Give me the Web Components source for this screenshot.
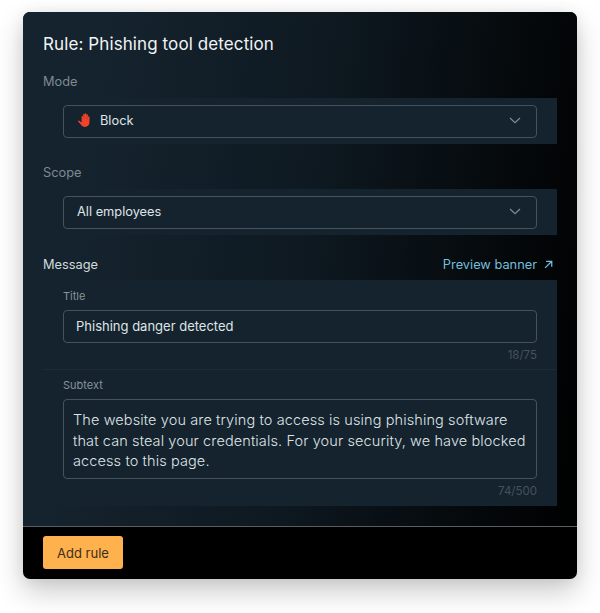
<!DOCTYPE html>
<html lang="en">
<head>
<meta charset="utf-8">
<title>Rule</title>
<style>
  html, body { margin: 0; background: #fff; }
  body { padding: 12px 23px 34px; font-family: Inter, "Liberation Sans", sans-serif; }
</style>
</head>
<body>
<rule-card heading="Rule: Phishing tool detection">
  <rule-label>Mode</rule-label>
  <rule-panel>
    <rule-select>
      <svg slot="icon" width="14" height="14" viewBox="0 0 14 14"><path fill="#f0432a" d="M3.600 3.600c0-.9 1.500-.9 1.500 0v2.400h.1V1.500c0-.9 1.500-.9 1.500 0v4.500h.1V1c0-.9 1.500-.9 1.500 0v5h.1V1.900c0-.9 1.500-.9 1.500 0v5.400h.1V4c0-.9 1.500-.9 1.500 0v5.200c0 2.800-2 4.700-4.600 4.700-1.800 0-3-.8-3.800-2.100L.2 8.700c-.5-.8.500-1.500 1.100-.9l2.300 1.800z"/></svg>
      Block
    </rule-select>
  </rule-panel>
  <rule-label style="--gap:11px">Scope</rule-label>
  <rule-panel>
    <rule-select>All employees</rule-select>
  </rule-panel>
  <rule-label style="--gap:11px;--colour:#d3d9dd;--nudge:2px">
    Message
    <a slot="aside">Preview banner
      <svg width="9" height="9" viewBox="0 0 10 10" fill="none" stroke="#74bfdc" stroke-width="1.400"><path d="M1.200 8.800 8.600 1.400M2.400 1.400h6.200v6.200"/></svg>
    </a>
  </rule-label>
  <rule-panel class="message">
    <text-field label="Title" count="18/75" divided>Phishing danger detected</text-field>
    <text-field label="Subtext" count="74/500" multiline>The website you are trying to access is using phishing software that can steal your credentials. For your security, we have blocked access to this page.</text-field>
  </rule-panel>
  <button slot="footer">Add rule</button>
</rule-card>

<script>
  const chevron = `<svg width="12" height="7" viewBox="0 0 12 7" fill="none" stroke="#7f8c96" stroke-width="1.200"><path d="M1 1l5 4.600L11 1"/></svg>`;

  class RuleCard extends HTMLElement {
    connectedCallback() {
      this.attachShadow({ mode: 'open' });
      this.shadowRoot.innerHTML = `
        <style>
          :host {
            display: block;
            border-radius: 7px;
            overflow: hidden;
            background: #000;
            color: #e9edef;
            box-shadow: 0 12px 28px rgba(0, 0, 0, .22), 0 0 14px rgba(0, 0, 0, .06);
          }
          .body {
            padding: 20px 20px 20px;
            background: linear-gradient(97deg, #15232e 14%, #0e1921 50%, #000 100%);
          }
          h2 {
            margin: 0 0 8px;
            font-size: 17px;
            line-height: 24px;
            font-weight: 400;
            letter-spacing: .1px;
            color: #f1f3f5;
          }
          .foot {
            border-top: 1px solid #5b5f63;
            padding: 9px 20px 10px;
          }
          ::slotted(button) {
            display: block;
            height: 33px;
            width: 80px;
            padding: 0;
            border: 0;
            border-radius: 3px;
            background: #ffb14e;
            color: #3a2e1c;
            font: 400 13px Inter, sans-serif;
          }
        </style>
        <div class="body">
          <h2>${this.getAttribute('heading')}</h2>
          <slot></slot>
        </div>
        <div class="foot"><slot name="footer"></slot></div>
      `;
    }
  }

  class RuleLabel extends HTMLElement {
    connectedCallback() {
      this.attachShadow({ mode: 'open' });
      this.shadowRoot.innerHTML = `
        <style>
          :host {
            display: flex;
            justify-content: space-between;
            align-items: center;
            box-sizing: border-box;
            margin-top: var(--gap, 0);
            padding-top: var(--nudge, 0);
            height: 34px;
            font-size: 12.800px;
            color: var(--colour, #7e8a93);
          }
          ::slotted(a) {
            display: flex;
            align-items: center;
            gap: 7px;
            padding-right: 4px;
            color: #74bfdc;
            font-size: 12.800px;
          }
        </style>
        <span><slot></slot></span>
        <slot name="aside"></slot>
      `;
    }
  }

  class RulePanel extends HTMLElement {
    connectedCallback() {
      this.attachShadow({ mode: 'open' });
      this.shadowRoot.innerHTML = `
        <style>
          :host {
            display: block;
            padding: 7px 20px 6px;
            background: #15232e;
          }
          :host(.message) { padding: 0 20px; }
        </style>
        <slot></slot>
      `;
    }
  }

  class RuleSelect extends HTMLElement {
    connectedCallback() {
      this.attachShadow({ mode: 'open' });
      this.shadowRoot.innerHTML = `
        <style>
          :host {
            display: flex;
            align-items: center;
            box-sizing: border-box;
            height: 33px;
            padding: 0 15px 0 13px;
            border: 1px solid #47535c;
            border-radius: 4px;
            font-size: 12.800px;
            color: #dfe4e7;
          }
          .value { flex: 1; display: flex; align-items: center; gap: 8px; padding-bottom: 3px; }
          svg { display: block; margin-top: -3px; }
          ::slotted(svg) { margin: 0 0 0 1px; }
        </style>
        <span class="value"><slot name="icon"></slot><span><slot></slot></span></span>
        ${chevron}
      `;
    }
  }

  class TextField extends HTMLElement {
    connectedCallback() {
      this.attachShadow({ mode: 'open' });
      this.shadowRoot.innerHTML = `
        <style>
          :host {
            display: block;
            margin: 0 -20px;
            padding: 0 20px;
          }
          :host([divided]) { border-bottom: 1px solid #1d2c37; }
          .label {
            height: 30px;
            line-height: 32px;
            font-size: 11px;
            color: #87939c;
          }
          .box {
            box-sizing: border-box;
            border: 1px solid #47535c;
            border-radius: 4px;
            padding: 0 12px;
            height: 33px;
            line-height: 31px;
            font-size: 13px;
            color: #dfe4e7;
          }
          .count {
            height: 26px;
            line-height: 25px;
            text-align: right;
            font-size: 11.500px;
            color: #46525b;
          }
          :host([multiline]) .label { height: 29px; line-height: 30px; }
          :host([multiline]) .box {
            height: 80px;
            padding: 10px 9px 8px;
            line-height: 20.700px;
            font-size: 14.500px;
            font-weight: 300;
            letter-spacing: .11px;
          }
          :host([multiline]) .count { height: 27px; line-height: 24px; }
        </style>
        <div class="label">${this.getAttribute('label')}</div>
        <div class="box"><slot></slot></div>
        <div class="count">${this.getAttribute('count')}</div>
      `;
    }
  }

  customElements.define('rule-card', RuleCard);
  customElements.define('rule-label', RuleLabel);
  customElements.define('rule-panel', RulePanel);
  customElements.define('rule-select', RuleSelect);
  customElements.define('text-field', TextField);
</script>
</body>
</html>
